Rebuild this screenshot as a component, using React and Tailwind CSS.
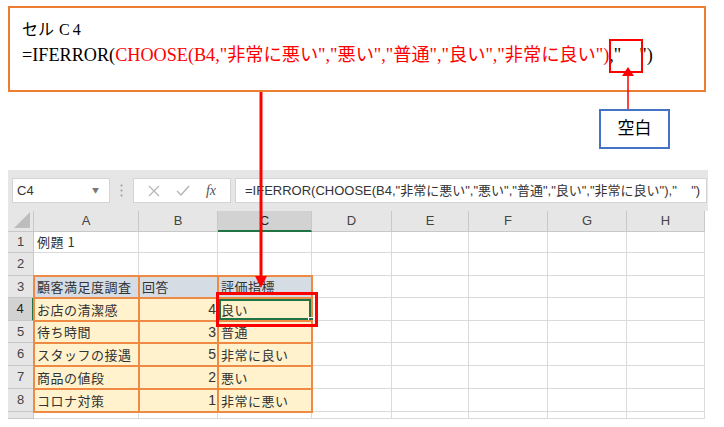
import React from "react";

const serif = { fontFamily: '"Liberation Serif", "Noto Sans CJK JP", serif' };
const sans = { fontFamily: '"Noto Sans CJK JP", "Liberation Sans", sans-serif' };

const colLetters = ["A", "B", "C", "D", "E", "F", "G", "H"];

const rows = [
  { n: 1, cells: ["例題 1", "", ""] },
  { n: 2, cells: ["", "", ""] },
  { n: 3, cells: ["顧客満足度調査", "回答", "評価指標"], head: true },
  { n: 4, cells: ["お店の清潔感", "4", "良い"], data: true },
  { n: 5, cells: ["待ち時間", "3", "普通"], data: true },
  { n: 6, cells: ["スタッフの接遇", "5", "非常に良い"], data: true },
  { n: 7, cells: ["商品の値段", "2", "悪い"], data: true },
  { n: 8, cells: ["コロナ対策", "1", "非常に悪い"], data: true },
  { n: 9, cells: ["", "", ""], short: true },
];

const Toolbar = () => (
  <div className="h-[41px] bg-[#E6E6E6] flex items-center pl-[4px] gap-0 text-[#444]" style={sans}>
    <div className="w-[98px] h-[25px] bg-white border border-[#D4D4D4] flex items-center justify-between pl-[4px] pr-[10px]">
      <span className="text-[13px] text-[#333]" style={{ fontFamily: '"Liberation Sans", sans-serif' }}>C4</span>
      <span className="text-[7px] text-[#777]">▼</span>
    </div>
    <div className="w-[23px] flex justify-center">
      <svg width="3" height="13" viewBox="0 0 3 13">
        <circle cx="1.5" cy="1.5" r="1" fill="#9A9A9A" />
        <circle cx="1.5" cy="6.5" r="1" fill="#9A9A9A" />
        <circle cx="1.5" cy="11.5" r="1" fill="#9A9A9A" />
      </svg>
    </div>
    <div className="w-[98px] h-[25px] bg-white border border-[#D4D4D4] flex items-center justify-around px-[6px]">
      <svg width="12" height="12" viewBox="0 0 12 12">
        <path d="M1 1 L11 11 M11 1 L1 11" stroke="#B5B5B5" strokeWidth="1.2" fill="none" />
      </svg>
      <svg width="14" height="11" viewBox="0 0 14 11">
        <path d="M1 6 L5 10 L13 1" stroke="#B5B5B5" strokeWidth="1.4" fill="none" />
      </svg>
      <span className="text-[14px] italic text-[#555]" style={serif}>fx</span>
    </div>
    <div className="ml-[4px] w-[472px] h-[25px] bg-white border border-[#D4D4D4] flex items-center pl-[9px] text-[13px] text-[#333] whitespace-pre" style={{ fontFamily: '"Liberation Sans", "Noto Sans CJK JP", sans-serif' }}>
      =IFERROR(CHOOSE(B4,"非常に悪い","悪い","普通","良い","非常に良い"),"    ")
    </div>
  </div>
);

const Sheet = () => (
  <div
    className="grid grid-cols-[26px_105px_79px_94px_80px_77px_79px_79px_78px] grid-rows-[21px_21px_23px_22px_23px_22px_23px_23px_23px_7px] text-[13px] text-[#333] bg-white"
    style={sans}
  >
    <div className="bg-[#E6E6E6] border-r border-b border-[#C8C8C8] flex items-end justify-end p-[3px]">
      <svg width="16" height="16" viewBox="0 0 16 16">
        <path d="M16 0 L16 16 L0 16 Z" fill="#BDBDBD" />
      </svg>
    </div>
    {colLetters.map((c) => (
      <div
        key={c}
        className={
          c === "C"
            ? "bg-[#D2D2D2] border-r border-[#C8C8C8] border-b-2 border-b-[#217346] flex items-center justify-center text-[#222]"
            : "bg-[#E6E6E6] border-r border-b border-[#C8C8C8] flex items-center justify-center text-[#444]"
        }
        style={{ fontFamily: '"Liberation Sans", sans-serif' }}
      >
        {c}
      </div>
    ))}
    {rows.map((r) => (
      <React.Fragment key={r.n}>
        <div
          className={
            r.n === 4
              ? "bg-[#D2D2D2] border-b border-[#C8C8C8] border-r-2 border-r-[#217346] flex items-center justify-center text-[#222] overflow-hidden"
              : "bg-[#E6E6E6] border-r border-b border-[#C8C8C8] flex items-center justify-center text-[#444] overflow-hidden"
          }
          style={{ fontFamily: '"Liberation Sans", sans-serif' }}
        >
          {r.short ? "" : r.n}
        </div>
        {r.cells.map((v, i) => {
          const inTable = r.head || r.data;
          const bg = r.head ? "bg-[#D6DCE4]" : r.data ? "bg-[#FFF2CC]" : "bg-white";
          const border = inTable
            ? "outline-2 outline-solid outline-[#EE8A43] -outline-offset-1 z-[1]"
            : "border-r border-b border-[#DADADA]";
          const align = r.data && i === 1 ? "justify-end pr-[2px]" : "justify-start pl-[3px]";
          const selected = r.n === 4 && i === 2;
          return (
            <div key={i} className={`relative flex items-center whitespace-nowrap ${bg} ${border} ${align}`}>
              <span className={i === 1 && r.data ? "" : "tracking-[0.5px]"} style={i === 1 && r.data ? { fontFamily: '"Liberation Sans", sans-serif', fontSize: "14px" } : undefined}>
                {v}
              </span>
              {selected && (
                <div className="absolute inset-[1px] border-2 border-[#217346]">
                  <div className="absolute -right-[5px] -bottom-[5px] w-[6px] h-[6px] bg-[#217346] border border-white" />
                </div>
              )}
            </div>
          );
        })}
        {[0, 1, 2, 3, 4].map((k) => (
          <div key={k} className="border-r border-b border-[#DADADA]" />
        ))}
      </React.Fragment>
    ))}
  </div>
);

export default function App() {
  return (
    <div className="relative w-[724px] h-[427px] bg-white overflow-hidden">
      <div className="ml-[8px] mt-[6px] w-[698px] h-[86px] border-2 border-[#ED7D31] pl-[12px] pt-[12px] text-black" style={serif}>
        <div className="text-[16px] leading-[20px]">
          <span>セル</span>
          <span className="ml-[5px] tracking-[3px]">C4</span>
        </div>
        <div className="mt-[3px] text-[18.2px] leading-[24px] whitespace-pre">
          =IFERROR(
          <span className="text-[#FF0000]">CHOOSE(B4,"非常に悪い","悪い","普通","良い","非常に良い")</span>
          ,"    ")
        </div>
      </div>

      <div className="ml-[8px] mt-[78px] w-[700px]">
        <Toolbar />
        <Sheet />
      </div>

      {/* callout: blank string */}
      <div className="absolute left-[609px] top-[39px] w-[34px] h-[34px] border-2 border-[#FF0000]" />
      <svg className="absolute left-[620px] top-[64px]" width="16" height="46" viewBox="0 0 16 46">
        <path d="M8 3 L2 12 L14 12 Z" fill="#FF0000" />
        <path d="M8 11 L8 46" stroke="#FF0000" strokeWidth="1.5" />
      </svg>
      <div className="absolute left-[599px] top-[109px] w-[71px] h-[40px] border-2 border-[#4472C4] bg-white flex items-center justify-center text-[17px] text-black" style={serif}>
        空白
      </div>

      {/* arrow to C4 */}
      <svg className="absolute left-[253px] top-[92px] z-[5]" width="16" height="197" viewBox="0 0 16 197">
        <path d="M8 0 L8 186" stroke="#FF0000" strokeWidth="3" />
        <path d="M2 184 L14 184 L8 196 Z" fill="#FF0000" />
      </svg>
      <div className="absolute left-[216px] top-[292px] w-[102px] h-[35px] border-[3px] border-[#FF0000] z-[5]" />
    </div>
  );
}
